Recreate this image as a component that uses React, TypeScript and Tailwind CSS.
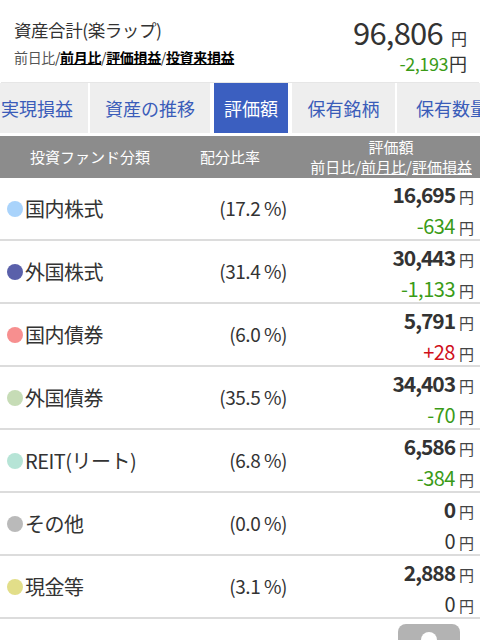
import React from 'react';

type Row = {
  name: string;
  dot: string;
  pct: string;
  value: string;
  diff: string;
  diffColor: string;
};

const rows: Row[] = [
  { name: '国内株式', dot: 'bg-[#a9d3fb]', pct: '(17.2 %)', value: '16,695', diff: '-634', diffColor: 'text-[#3a9b17]' },
  { name: '外国株式', dot: 'bg-[#5a60aa]', pct: '(31.4 %)', value: '30,443', diff: '-1,133', diffColor: 'text-[#3a9b17]' },
  { name: '国内債券', dot: 'bg-[#f78f8f]', pct: '(6.0 %)', value: '5,791', diff: '+28', diffColor: 'text-[#d0101a]' },
  { name: '外国債券', dot: 'bg-[#c6dcb6]', pct: '(35.5 %)', value: '34,403', diff: '-70', diffColor: 'text-[#3a9b17]' },
  { name: 'REIT(リート)', dot: 'bg-[#b6e4d6]', pct: '(6.8 %)', value: '6,586', diff: '-384', diffColor: 'text-[#3a9b17]' },
  { name: 'その他', dot: 'bg-[#bababa]', pct: '(0.0 %)', value: '0', diff: '0', diffColor: 'text-[#333333]' },
  { name: '現金等', dot: 'bg-[#e2de89]', pct: '(3.1 %)', value: '2,888', diff: '0', diffColor: 'text-[#333333]' },
];

const tabs = [
  { label: '実現損益', w: 'w-[102px]', active: false },
  { label: '資産の推移', w: 'w-[120px]', active: false },
  { label: '評価額', w: 'w-[78px]', active: true },
  { label: '保有銘柄', w: 'w-[103px]', active: false },
  { label: '保有数量', w: 'w-[110px]', active: false },
];

const font = { fontFamily: '"Noto Sans CJK JP", "Noto Sans", sans-serif' };

export default function App() {
  return (
    <div className="relative w-[480px] h-[640px] overflow-hidden bg-white text-[#333333]" style={font}>
      {/* summary card */}
      <div className="h-[82px] mx-[1px] mt-[1px] bg-white flex justify-between pl-[13px] pr-[12px] border-b border-[#e6e6e6]">
        <div className="pt-[16px]">
          <div className="text-[17.5px] leading-[26px] tracking-tight">資産合計(楽ラップ)</div>
          <div className="text-[14px] leading-[20px] mt-[4px] tracking-tight">
            <span className="text-[#555555]">前日比</span>/
            <span className="font-bold underline text-black">前月比</span>/
            <span className="font-bold underline text-black">評価損益</span>/
            <span className="font-bold underline text-black">投資来損益</span>
          </div>
        </div>
        <div className="pt-[15px] flex flex-col items-end">
          <div className="flex items-baseline">
            <span className="text-[31px] leading-[32px] tracking-tight">96,806</span>
            <span className="text-[16px] ml-[8px]">円</span>
          </div>
          <div className="flex items-baseline">
            <span className="text-[18px] leading-[24px] text-[#3a9b17] tracking-tight">-2,193</span>
            <span className="text-[18px] ml-[1px]">円</span>
          </div>
        </div>
      </div>

      {/* tabs */}
      <div className="flex gap-[2px] bg-white h-[50px] -ml-[14px]">
        {tabs.map((t) => (
          <div
            key={t.label}
            className={`${t.w} shrink-0 flex items-center justify-center text-[18px] ${
              t.active ? 'bg-[#3b5fc0] text-white border-x-2 border-white' : 'bg-[#eeeeee] text-[#3a5cb9]'
            }`}
          >
            {t.label}
          </div>
        ))}
      </div>

      {/* table header */}
      <div className="mt-[3px] h-[42px] bg-[#8c8c8c] text-white flex items-center text-[15px]">
        <div className="w-[180px] text-center">投資ファンド分類</div>
        <div className="w-[100px] text-center">配分比率</div>
        <div className="flex-1 flex justify-end pr-[8px]">
          <div className="text-center leading-[20px]">
            <div>評価額</div>
            <div>
              前日比/<span className="underline">前月比</span>/<span className="underline">評価損益</span>
            </div>
          </div>
        </div>
      </div>

      {/* rows */}
      {rows.map((r) => (
        <div key={r.name} className="h-[63px] border-b-2 border-[#dcdcdc] flex items-center pl-[7px] pr-[6px]">
          <div className="flex items-center w-[190px]">
            <span className={`w-[16px] h-[16px] rounded-full ${r.dot}`} />
            <span className="text-[20px] ml-[2px] tracking-tight">{r.name}</span>
          </div>
          <div className="w-[90px] text-right text-[19px] tracking-tight">{r.pct}</div>
          <div className="flex-1 flex flex-col items-end pt-[2px]">
            <div className="flex items-baseline">
              <span className="text-[21px] font-bold leading-[28px] tracking-tighter">{r.value}</span>
              <span className="text-[15px] ml-[4px] text-[#444444]">円</span>
            </div>
            <div className="flex items-baseline mt-[4px]">
              <span className={`text-[20px] leading-[26px] tracking-tight ${r.diffColor}`}>{r.diff}</span>
              <span className="text-[15px] ml-[4px] text-[#444444]">円</span>
            </div>
          </div>
        </div>
      ))}

      {/* floating button */}
      <div className="absolute left-[398px] top-[624px] w-[62px] h-[40px] rounded-[8px] bg-[#b3b3b3] flex justify-center">
        <span className="mt-[8px] w-[16px] h-[16px] rounded-full bg-white" />
      </div>
    </div>
  );
}
